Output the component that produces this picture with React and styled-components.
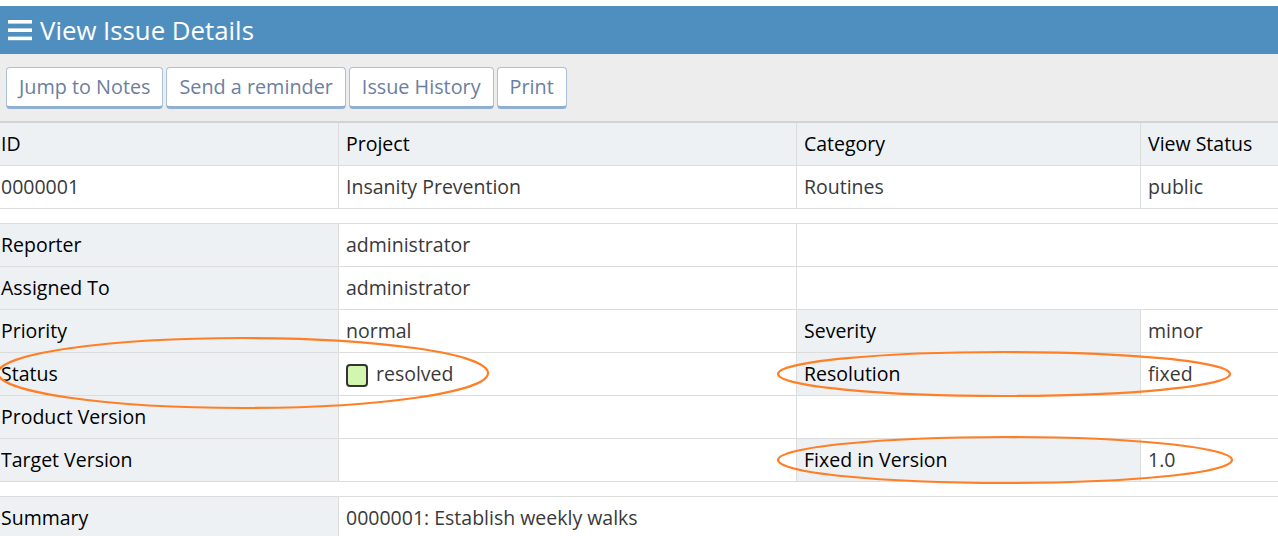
import React from 'react'
import styled, { createGlobalStyle } from 'styled-components'

const GlobalStyle = createGlobalStyle`
    html, body {
        margin: 0;
        padding: 0;
        background: #fff;
        overflow: hidden;
    }
    body {
        font-family: "Open Sans", "Noto Sans", sans-serif;
    }
`

const Page = styled.div`
    position: relative;
    padding-top: 6px;
    width: 1278px;
    overflow: hidden;
`

const TitleBar = styled.div`
    display: flex;
    align-items: center;
    gap: 8px;
    height: 48px;
    padding-left: 8px;
    background: #4f8fbf;
    color: #fff;
    font-size: 25.8px;
`

const Toolbar = styled.div`
    display: flex;
    align-items: center;
    gap: 3px;
    height: 69px;
    padding-left: 6px;
    background: #ededed;
    border-bottom: 2px solid #d3d3d3;
    box-sizing: border-box;
`

const Button = styled.button`
    height: 42px;
    padding: 0 12px;
    background: #fff;
    border: 1px solid #a9c2da;
    border-bottom: 3px solid #8fb0d0;
    border-radius: 4px;
    font-family: inherit;
    font-size: 19.8px;
    color: #6b80a0;
    box-sizing: border-box;
`

const Table = styled.table`
    margin-left: -7px;
    width: 1300px;
    table-layout: fixed;
    border-collapse: collapse;
    font-size: 19.5px;
`

const Cell = styled.td`
    padding: 10px 7px;
    line-height: 22px;
    height: 22px;
    border: 1px solid #dcdcdc;
    border-top: 0;
    white-space: nowrap;
    overflow: hidden;
    color: ${p => (p.$label ? '#000' : '#393939')};
    background: ${p => (p.$label ? '#edf1f4' : '#fff')};
    text-align: left;
    font-weight: normal;
`

const Spacer = styled.td`
    height: 14px;
    padding: 0;
    border-bottom: 1px solid #dcdcdc;
`

const StatusBox = styled.span`
    display: inline-block;
    width: 18px;
    height: 19px;
    margin: -4px 8px -4px 0;
    vertical-align: -2px;
    background: #d2f5b0;
    border: 2px solid #333;
    border-radius: 4px;
`

const Overlay = styled.svg`
    position: absolute;
    top: 0;
    left: 0;
    pointer-events: none;
`

function Bars() {
    return (
        <svg width="24" height="21" viewBox="0 0 24 21">
            <rect x="0" y="0" width="24" height="3.6" fill="#fff" />
            <rect x="0" y="8.4" width="24" height="3.6" fill="#fff" />
            <rect x="0" y="16.6" width="24" height="3.6" fill="#fff" />
        </svg>
    )
}

const L = props => <Cell as="th" $label {...props} />
const V = props => <Cell {...props} />

export default function App() {
    return (
        <Page>
            <GlobalStyle />
            <TitleBar>
                <Bars />
                <span>View Issue Details</span>
            </TitleBar>
            <Toolbar>
                <Button>Jump to Notes</Button>
                <Button>Send a reminder</Button>
                <Button>Issue History</Button>
                <Button>Print</Button>
            </Toolbar>
            <Table>
                <colgroup>
                    <col style={{ width: 345 }} />
                    <col style={{ width: 458 }} />
                    <col style={{ width: 344 }} />
                    <col style={{ width: 153 }} />
                </colgroup>
                <tbody>
                    <tr>
                        <L>ID</L>
                        <L>Project</L>
                        <L>Category</L>
                        <L>View Status</L>
                    </tr>
                    <tr>
                        <V>0000001</V>
                        <V>Insanity Prevention</V>
                        <V>Routines</V>
                        <V>public</V>
                    </tr>
                    <tr><Spacer colSpan={4} /></tr>
                    <tr>
                        <L>Reporter</L>
                        <V>administrator</V>
                        <V colSpan={2} />
                    </tr>
                    <tr>
                        <L>Assigned To</L>
                        <V>administrator</V>
                        <V colSpan={2} />
                    </tr>
                    <tr>
                        <L>Priority</L>
                        <V>normal</V>
                        <L>Severity</L>
                        <V>minor</V>
                    </tr>
                    <tr>
                        <L>Status</L>
                        <V><StatusBox />resolved</V>
                        <L>Resolution</L>
                        <V>fixed</V>
                    </tr>
                    <tr>
                        <L>Product Version</L>
                        <V />
                        <V colSpan={2} />
                    </tr>
                    <tr>
                        <L>Target Version</L>
                        <V />
                        <L>Fixed in Version</L>
                        <V>1.0</V>
                    </tr>
                    <tr><Spacer colSpan={4} /></tr>
                    <tr>
                        <L>Summary</L>
                        <V colSpan={3}>0000001: Establish weekly walks</V>
                    </tr>
                </tbody>
            </Table>
            <Overlay width="1278" height="536">
                <g fill="none" stroke="#ff7f27" strokeWidth="2.2">
                    <ellipse cx="243" cy="373" rx="245" ry="35" />
                    <ellipse cx="1004" cy="374" rx="226" ry="22" />
                    <ellipse cx="1005" cy="460" rx="227" ry="23" />
                </g>
            </Overlay>
        </Page>
    )
}
